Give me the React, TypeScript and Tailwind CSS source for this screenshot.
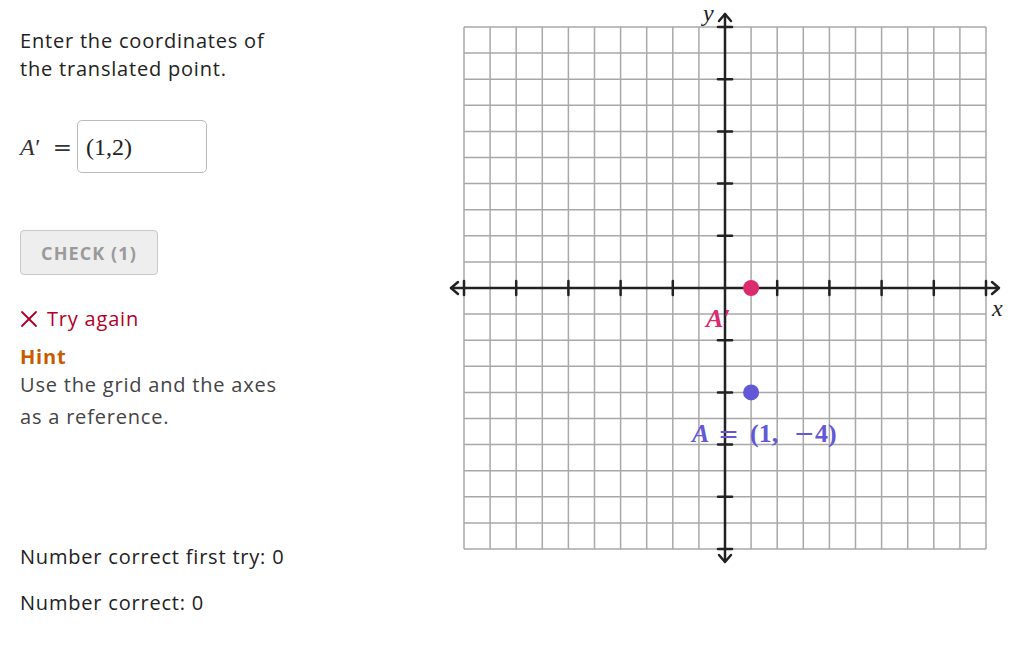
import React from 'react';

const X0 = 464;
const Y0 = 27;
const STEP = 26.1;
const OX = X0 + 10 * STEP;
const OY = Y0 + 10 * STEP;
const SERIF = "'Liberation Serif', 'DejaVu Serif', serif";
const WIDE = "'DejaVu Serif', serif";

function Graph() {
  const lines = Array.from({ length: 21 }, (_, i) => i);
  const ticks = [0, 2, 4, 6, 8, 12, 14, 16, 18, 20];
  return (
    <svg width={580} height={580} viewBox="445 0 580 580" className="block shrink-0">
      {lines.map((i) => (
        <line key={'v' + i} x1={X0 + i * STEP} y1={Y0} x2={X0 + i * STEP} y2={Y0 + 20 * STEP} stroke="#a8a8a8" strokeWidth={1.5} />
      ))}
      {lines.map((i) => (
        <line key={'h' + i} x1={X0} y1={Y0 + i * STEP} x2={X0 + 20 * STEP} y2={Y0 + i * STEP} stroke="#a8a8a8" strokeWidth={1.5} />
      ))}
      <g stroke="#222" strokeWidth={2.5} fill="none" strokeLinecap="round" strokeLinejoin="round">
        <line x1={451} y1={OY} x2={998} y2={OY} />
        <line x1={OX} y1={14} x2={OX} y2={561} />
        <polyline points={`458,${OY - 6} 451,${OY} 458,${OY + 6}`} />
        <polyline points={`992,${OY - 6} 999,${OY} 992,${OY + 6}`} />
        <polyline points={`${OX - 6},21 ${OX},14 ${OX + 6},21`} />
        <polyline points={`${OX - 6},555 ${OX},562 ${OX + 6},555`} />
        {ticks.map((k) => (
          <line key={'tx' + k} x1={X0 + k * STEP} y1={OY - 7} x2={X0 + k * STEP} y2={OY + 7} />
        ))}
        {ticks.map((k) => (
          <line key={'ty' + k} x1={OX - 7} y1={Y0 + k * STEP} x2={OX + 7} y2={Y0 + k * STEP} />
        ))}
      </g>
      <text x={703} y={21} fontFamily={SERIF} fontStyle="italic" fontSize={24} fill="#222">y</text>
      <text x={992} y={316} fontFamily={SERIF} fontStyle="italic" fontSize={24} fill="#222">x</text>
      <circle cx={OX + STEP} cy={OY} r={8} fill="#dc2a6e" />
      <circle cx={OX + STEP} cy={OY + 4 * STEP} r={8} fill="#6358d6" />
      <text x={706} y={327} fontFamily={SERIF} fontStyle="italic" fontWeight="bold" fontSize={26} fill="#dc2a6e">A′</text>
      <g fontWeight="bold" fontSize={26} fill="#6358d6">
        <text x={692} y={442} fontFamily={SERIF} fontStyle="italic">A</text>
        <text x={718} y={442} fontFamily={WIDE} fontWeight="normal" fontSize={25}>=</text>
        <text x={750} y={442} fontFamily={SERIF}>(1,</text>
        <text x={794} y={442} fontFamily={WIDE} fontWeight="normal" fontSize={25}>−</text>
        <text x={815} y={442} fontFamily={SERIF}>4)</text>
      </g>
    </svg>
  );
}

export default function App() {
  return (
    <div className="flex bg-white min-h-screen" style={{ fontFamily: '"Open Sans", "Noto Sans", sans-serif' }}>
      <div className="w-[445px] shrink-0 pl-5 pt-[27px] text-[20px] leading-[28px] text-[#222] tracking-[0.8px]">
        <p>
          Enter the coordinates of
          <br />
          the translated point.
        </p>

        <div className="mt-[37px] flex items-center tracking-normal">
          <div className="w-[57px] flex items-center pr-[5px] text-[24px] text-[#333]" style={{ fontFamily: SERIF }}>
            <i>A</i>
            <i className="-ml-[1px]">′</i>
            <span className="ml-auto text-[23px]" style={{ fontFamily: WIDE }}>=</span>
          </div>
          <div
            className="w-[130px] h-[53px] border border-[#bbb] rounded-[5px] flex items-center px-2 text-[24px] text-[#222]"
            style={{ fontFamily: SERIF }}
          >
            (1,2)
          </div>
        </div>

        <button className="mt-[57px] w-[138px] h-[45px] bg-[#eeeeee] border border-[#c8c8c8] rounded-[4px] text-[18px] font-bold text-[#9a9a9a] tracking-[1.1px]">
          CHECK (1)
        </button>

        <div className="mt-[30px] flex items-center gap-[9px] text-[#b3002a]">
          <svg width="18" height="18" viewBox="0 0 18 18" stroke="currentColor" strokeWidth={1.8} strokeLinecap="round">
            <line x1="2" y1="2" x2="16" y2="16" />
            <line x1="16" y1="2" x2="2" y2="16" />
          </svg>
          <span>Try again</span>
        </div>

        <div className="mt-[11px] font-bold text-[#c85a00] leading-[26px]">Hint</div>
        <p className="leading-[32px] text-[#444] -mt-[1px]">
          Use the grid and the axes
          <br />
          as a reference.
        </p>

        <p className="mt-[110px]">Number correct first try: 0</p>
        <p className="mt-[18px]">Number correct: 0</p>
      </div>
      <Graph />
    </div>
  );
}
